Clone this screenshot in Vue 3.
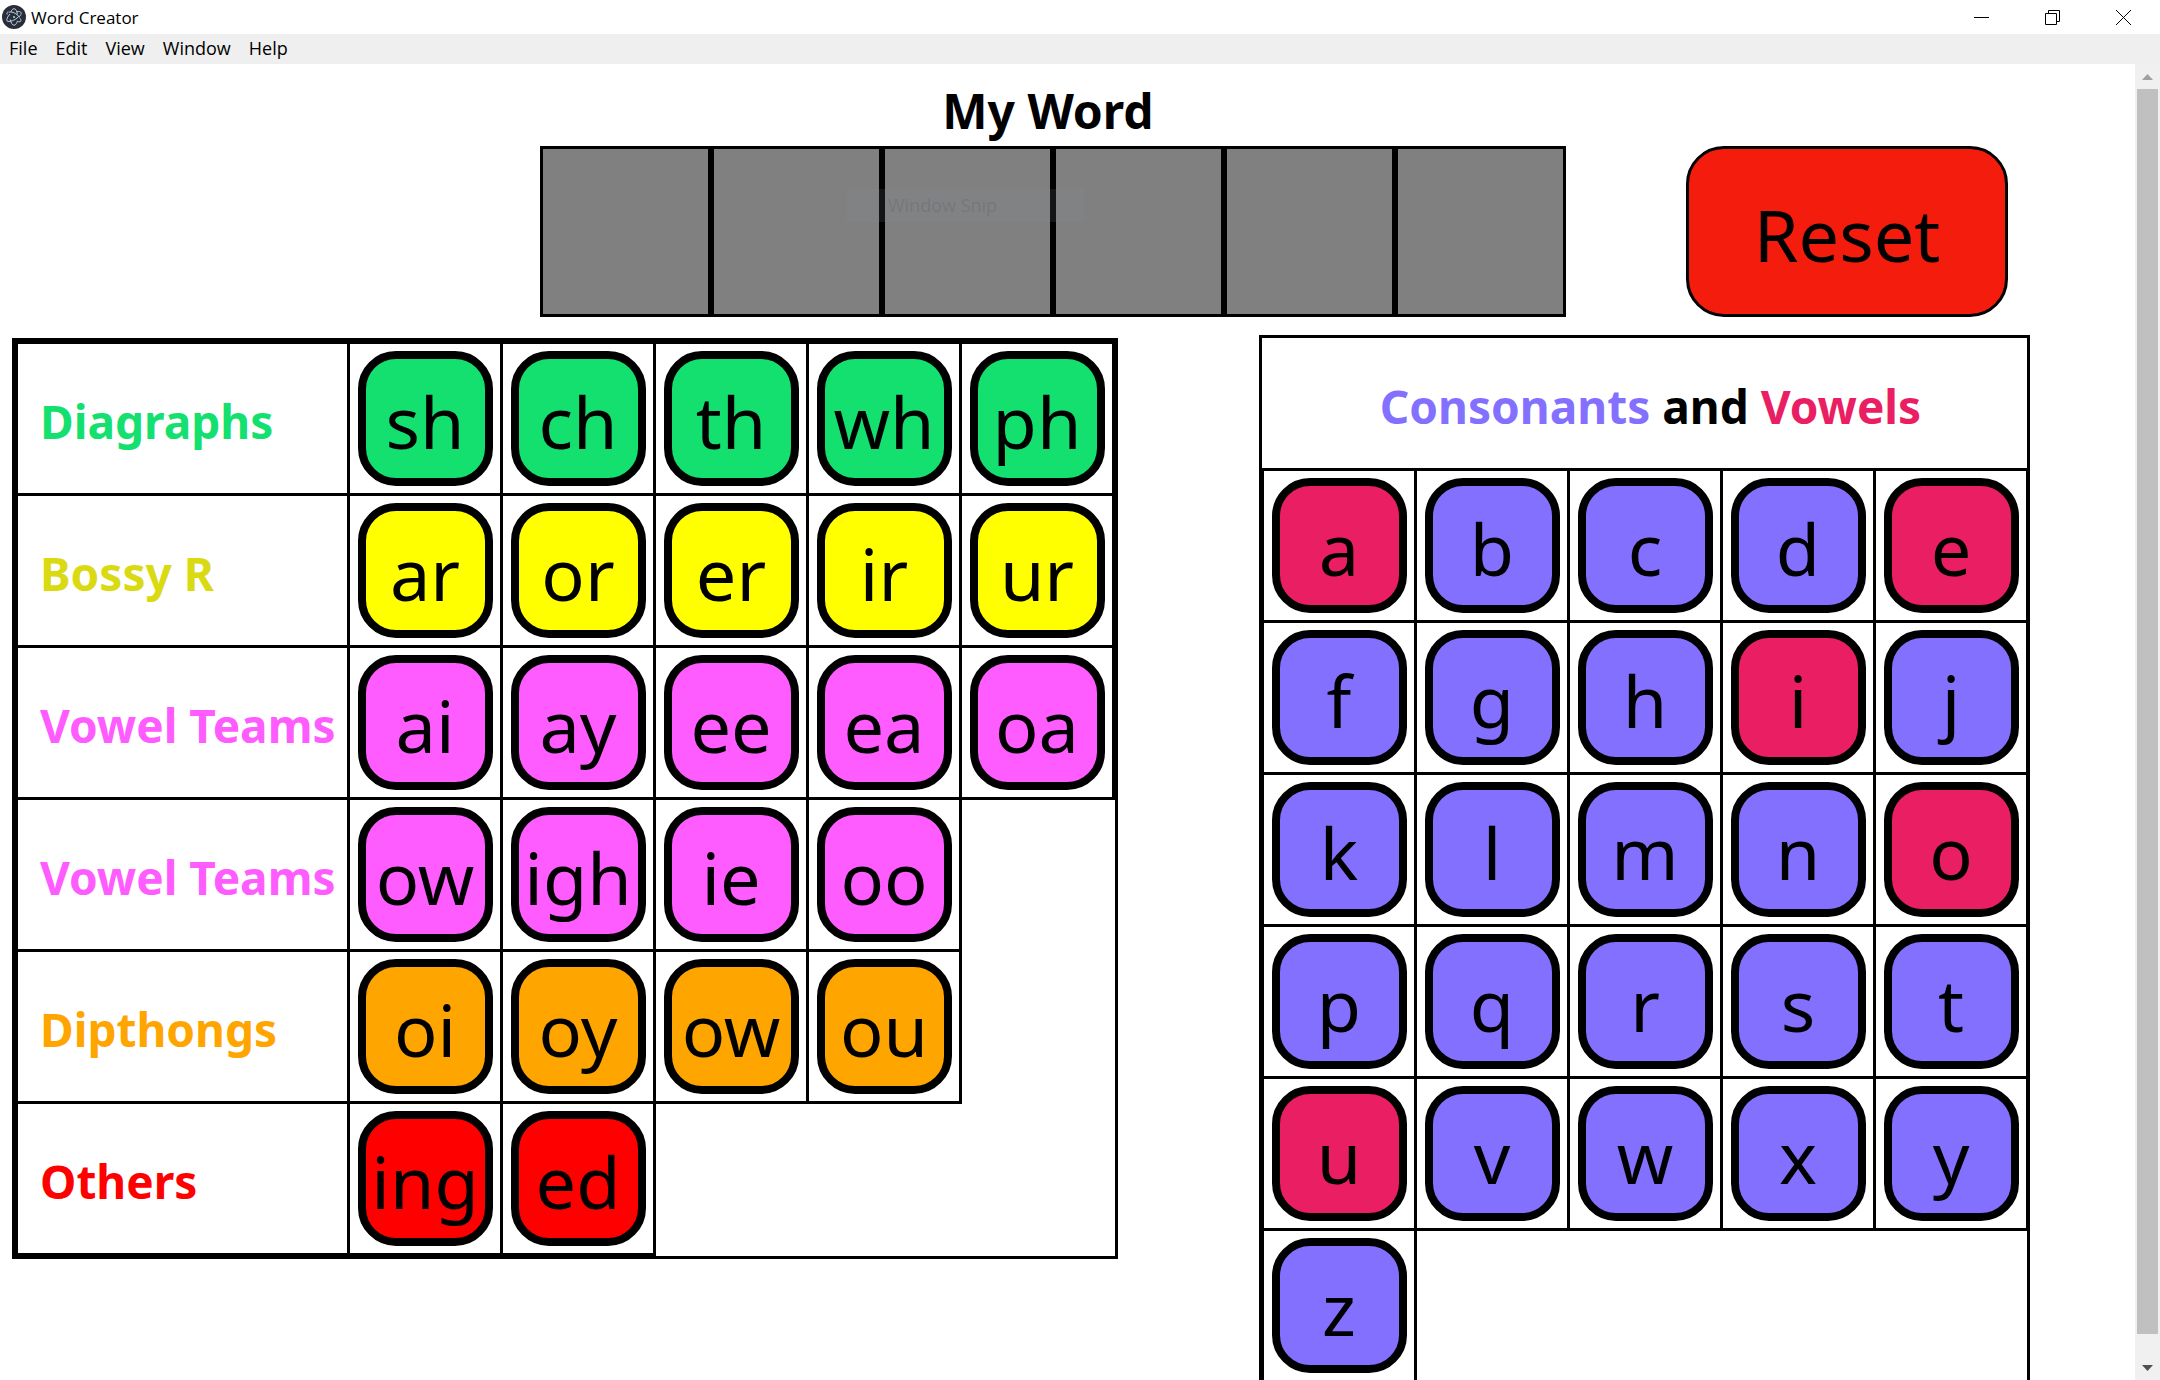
<script setup>
const menus = ['File', 'Edit', 'View', 'Window', 'Help']

const groups = [
  { name: 'Diagraphs', kind: 'green', sounds: ['sh', 'ch', 'th', 'wh', 'ph'] },
  { name: 'Bossy R', kind: 'yellow', sounds: ['ar', 'or', 'er', 'ir', 'ur'] },
  { name: 'Vowel Teams', kind: 'pink', sounds: ['ai', 'ay', 'ee', 'ea', 'oa'] },
  { name: 'Vowel Teams', kind: 'pink', sounds: ['ow', 'igh', 'ie', 'oo'] },
  { name: 'Dipthongs', kind: 'orange', sounds: ['oi', 'oy', 'ow', 'ou'] },
  { name: 'Others', kind: 'red', sounds: ['ing', 'ed'] },
]

const letterRows = ['abcde', 'fghij', 'klmno', 'pqrst', 'uvwxy', 'z'].map((row) => row.split(''))
const isVowel = (letter) => 'aeiou'.includes(letter)
</script>

<template>
  <div class="window">
    <header class="titlebar">
      <svg class="logo" viewBox="0 0 24 24" aria-hidden="true">
        <circle cx="12" cy="12" r="12" fill="#2b2e3a" />
        <g fill="none" stroke="#b4d3e2" stroke-width="1">
          <path d="M7 7.200c3-.9 8 1.200 10.500 5.300M5.300 9.500c-.7-1.500-.3-2.400 1.200-2.500" />
          <path d="M15 6.700c2-.4 3.700-.1 4.100.9.400 1-.4 2.600-1.900 4.200" />
          <path d="M8 9c-2.500 2.700-3.800 5.600-3 6.800.8 1.200 4.500.8 8-1.300 1.500-.9 2.600-1.800 3.500-2.800" />
          <path d="M9 7c.6-2.100 1.700-3.300 3-3.300 1.700 0 3 2.400 3.400 5.800" />
          <path d="M8.300 14.500c.6 3.400 2 5.700 3.700 5.700 1.300 0 2.400-1.200 3-3.100" />
          <path d="M18.200 13.500c1 1.600.9 2.900-.3 3.200-.8.200-2 0-3.200-.5" />
        </g>
        <circle cx="12" cy="12" r="1" fill="#b4d3e2" />
      </svg>
      <span class="caption">Word Creator</span>
      <div class="controls">
        <button type="button" aria-label="Minimize">
          <svg viewBox="0 0 15 15"><path d="M0 7.500h15" /></svg>
        </button>
        <button type="button" aria-label="Restore">
          <svg viewBox="0 0 15 15"><path d="M.5 3.500h11v11h-11zM3.500 3.500v-3h11v11h-3" /></svg>
        </button>
        <button type="button" aria-label="Close">
          <svg viewBox="0 0 15 15"><path d="M0 0l15 15M15 0L0 15" /></svg>
        </button>
      </div>
    </header>

    <nav class="menubar">
      <button v-for="menu in menus" :key="menu" type="button">{{ menu }}</button>
    </nav>

    <div class="viewport">
      <main class="page">
        <section class="top">
          <div class="word">
            <h1>My Word</h1>
            <div class="slots">
              <div v-for="n in 6" :key="n" class="slot"></div>
              <div class="ghost">Window Snip</div>
            </div>
          </div>
          <button type="button" class="reset">Reset</button>
        </section>

        <section class="boards">
          <div class="board sounds">
            <table>
              <colgroup>
                <col class="label-col" />
                <col v-for="n in 5" :key="n" class="tile-col" />
              </colgroup>
              <tbody>
                <tr v-for="(group, i) in groups" :key="i">
                  <th scope="row" :class="group.kind">{{ group.name }}</th>
                  <td v-for="sound in group.sounds" :key="sound">
                    <button type="button" class="tile" :class="group.kind">{{ sound }}</button>
                  </td>
                </tr>
              </tbody>
            </table>
          </div>

          <div class="board letters">
            <h2><span class="consonants">Consonants</span> and <span class="vowels">Vowels</span></h2>
            <table>
              <colgroup>
                <col v-for="n in 5" :key="n" class="tile-col" />
              </colgroup>
              <tbody>
                <tr v-for="(row, i) in letterRows" :key="i">
                  <td v-for="letter in row" :key="letter">
                    <button type="button" class="tile" :class="isVowel(letter) ? 'vowel' : 'consonant'">{{ letter }}</button>
                  </td>
                </tr>
              </tbody>
            </table>
          </div>
        </section>
      </main>

      <div class="scrollbar" aria-hidden="true">
        <svg class="arrow" viewBox="0 0 25 25"><path d="M7 16l5.500-6 5.500 6z" fill="#a0a0a0" /></svg>
        <div class="track"><div class="thumb"></div></div>
        <svg class="arrow" viewBox="0 0 25 25"><path d="M7 10l5.500 6 5.500-6z" fill="#505050" /></svg>
      </div>
    </div>
  </div>
</template>

<style>
html,
body {
  margin: 0;
  background: #fff;
  overflow: hidden;
}
</style>

<style scoped>
.window {
  display: flex;
  flex-direction: column;
  height: 100vh;
  color: #000;
  font-family: 'Noto Sans', sans-serif;
}

button {
  margin: 0;
  padding: 0;
  border: 0;
  background: none;
  color: inherit;
  font: inherit;
}

.titlebar {
  display: flex;
  align-items: center;
  flex: none;
  height: 34px;
  padding: 0 1px 0 2px;
  font-family: 'Segoe UI', 'Open Sans', sans-serif;
  font-size: 17px;
}

.logo {
  width: 24px;
  height: 24px;
}

.caption {
  margin-left: 5px;
}

.controls {
  display: flex;
  height: 33px;
  margin-left: auto;
}

.controls button {
  width: 71px;
}

.controls svg {
  display: block;
  width: 15px;
  height: 15px;
  margin: 0 auto;
  fill: none;
  stroke: #000;
  stroke-width: 1;
}

.menubar {
  display: flex;
  align-items: center;
  box-sizing: border-box;
  flex: none;
  height: 30px;
  padding-bottom: 2px;
  background: #efefef;
  font-family: 'Segoe UI', 'Open Sans', sans-serif;
  font-size: 18px;
  line-height: 24px;
}

.menubar button {
  padding: 0 9px;
}

.viewport {
  display: flex;
  flex: 1;
  min-height: 0;
}

.page {
  flex: 1;
  min-width: 0;
  overflow: hidden;
}

.top {
  display: flex;
  justify-content: flex-end;
  align-items: flex-end;
  gap: 120px;
  padding-right: 127px;
}

h1 {
  margin: 0;
  padding: 12px 10px 0 0;
  font-size: 48px;
  line-height: 70px;
  text-align: center;
}

.slots {
  display: flex;
  position: relative;
}

.slot {
  box-sizing: border-box;
  width: 171px;
  height: 171px;
  border: 3px solid #000;
  background: #808080;
}

.ghost {
  position: absolute;
  top: 43px;
  left: 307px;
  box-sizing: border-box;
  width: 237px;
  height: 33px;
  padding-left: 41px;
  background: rgba(135, 140, 152, 0.15);
  color: rgba(90, 92, 100, 0.3);
  font-family: 'Segoe UI', 'Open Sans', sans-serif;
  font-size: 18px;
  line-height: 33px;
}

.reset {
  box-sizing: border-box;
  width: 322px;
  height: 171px;
  padding-top: 4px;
  border: 3px solid #000;
  border-radius: 38px;
  background: #f41c0c;
  font-size: 72px;
  line-height: 96px;
}

.boards {
  display: flex;
  justify-content: space-between;
  align-items: flex-start;
  padding: 18px 105px 0 12px;
}

.board {
  border: 3px solid #000;
}

.sounds {
  margin-top: 3px;
}

table {
  table-layout: fixed;
  border-collapse: collapse;
}

.sounds table {
  width: 1100px;
}

.letters table {
  width: 768px;
  margin: 0 -2px 0 -1px;
}

.label-col {
  width: 332px;
}

.tile-col {
  width: 153px;
}

th,
td {
  box-sizing: border-box;
  height: 152px;
  padding: 0;
  border: 3px solid #000;
}

th {
  padding: 4px 0 0 22px;
  font-size: 46px;
  line-height: 70px;
  text-align: left;
  white-space: nowrap;
}

h2 {
  margin: 0;
  padding: 6px 0 0 12px;
  font-size: 46px;
  line-height: 124px;
  text-align: center;
}

.tile {
  display: block;
  box-sizing: border-box;
  width: 135px;
  height: 135px;
  margin: 0 auto;
  padding-top: 4px;
  border: 8px solid #000;
  border-radius: 38px;
  font-size: 72px;
  line-height: 96px;
}

th.green { color: #14e070; }
th.yellow { color: #dada12; }
th.pink { color: #ff5cff; }
th.orange { color: #ffa500; }
th.red { color: #f00; }

.tile.green { background: #14e070; }
.tile.yellow { background: #ff0; }
.tile.pink { background: #ff5cff; }
.tile.orange { background: #ffa500; }
.tile.red { background: #f00; }
.tile.consonant { background: #8470ff; }
.tile.vowel { background: #e91e63; }

.consonants { color: #8470ff; }
.vowels { color: #e91e63; }

.scrollbar {
  display: flex;
  flex-direction: column;
  flex: none;
  width: 25px;
  background: #f0f0f0;
}

.arrow {
  flex: none;
  width: 25px;
  height: 25px;
}

.track {
  flex: 1;
  padding: 0 2px 21px;
}

.thumb {
  height: 100%;
  background: #c0c0c0;
}
</style>
